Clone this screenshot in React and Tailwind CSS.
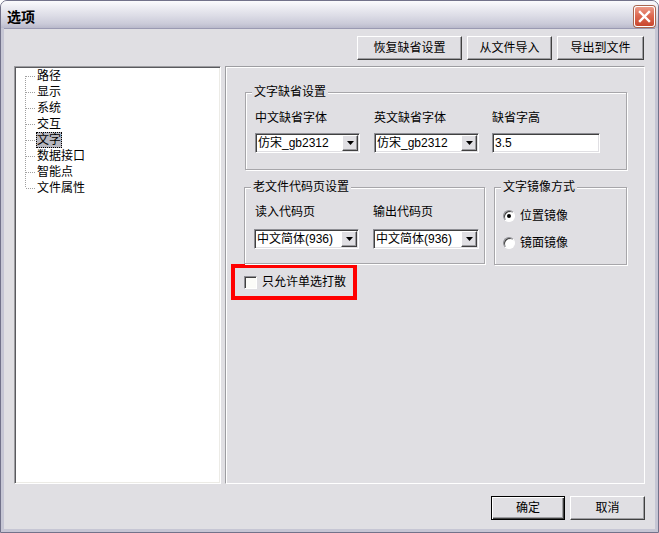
import React from "react";

const raised =
  "bg-[#e0dfe3] border border-t-white border-l-white border-r-[#404040] border-b-[#404040] shadow-[inset_-1px_-1px_0_#9d9da1]";

function Btn({ className, children, isDefault }) {
  if (isDefault) {
    return (
      <div className={`${className} h-[24px] border border-black bg-[#e0dfe3] shadow-[inset_1px_1px_0_white,inset_-1px_-1px_0_#404040,inset_-2px_-2px_0_#9d9da1] flex items-center justify-center text-[12px] leading-[12px]`}>
        {children}
      </div>
    );
  }
  return (
    <div className={`${className} h-[24px] ${raised} flex items-center justify-center text-[12px] leading-[12px]`}>
      {children}
    </div>
  );
}

const sunken =
  "border border-t-[#8e8e94] border-l-[#8e8e94] border-r-white border-b-white shadow-[inset_1px_1px_0_#404040,inset_-1px_-1px_0_#e0dfe3]";

function Combo({ className, text }) {
  return (
    <div className={`${className} h-[20px] bg-white ${sunken} flex items-center justify-between`}>
      <span className="pl-[2px] text-[12px] leading-[12px] whitespace-nowrap">{text}</span>
      <div className={`w-[16px] h-[16px] mr-[1px] ${raised} flex items-center justify-center`}>
        <svg width="7" height="4" viewBox="0 0 7 4">
          <path d="M0 0H7L3.5 4Z" fill="#000" />
        </svg>
      </div>
    </div>
  );
}

function Group({ className, title, children }) {
  return (
    <div className={`${className} relative border border-[#a7a6aa] shadow-[1px_1px_0_white,inset_1px_1px_0_white]`}>
      <span className="absolute left-[6px] -top-[7px] px-[2px] bg-[#e0dfe3] text-[12px] leading-[12px] whitespace-nowrap">
        {title}
      </span>
      {children}
    </div>
  );
}

function Radio({ checked, label }) {
  return (
    <div className="flex items-center h-[14px]">
      <div className="w-[12px] h-[12px] rounded-full border border-t-[#8e8e94] border-l-[#8e8e94] border-r-white border-b-white bg-white shadow-[inset_1px_1px_0_#404040] flex items-center justify-center">
        {checked && <div className="w-[4px] h-[4px] rounded-full bg-black" />}
      </div>
      <span className="ml-[5px] text-[12px] leading-[12px]">{label}</span>
    </div>
  );
}

const treeItems = ["路径", "显示", "系统", "交互", "文字", "数据接口", "智能点", "文件属性"];

function TreeRow({ label, index, last, selected }) {
  return (
    <div className="flex h-[16px] items-center">
      <svg width="22" height="16" viewBox="0 0 22 16" shapeRendering="crispEdges" className="shrink-0">
        <line
          x1="10.5"
          y1={index === 0 ? 8 : 0}
          x2="10.5"
          y2={last ? 8 : 16}
          stroke="#a0a0a0"
          strokeDasharray="1 1"
        />
        <line x1="11" y1="8.5" x2="20" y2="8.5" stroke="#a0a0a0" strokeDasharray="1 1" />
      </svg>
      {selected ? (
        <span className="-ml-[1px] px-[1px] h-[16px] flex items-center bg-[#b7b7bf] outline outline-1 outline-dotted outline-black -outline-offset-1 text-[12px] leading-[12px]">
          {label}
        </span>
      ) : (
        <span className="text-[12px] leading-[12px] whitespace-nowrap">{label}</span>
      )}
    </div>
  );
}

export default function App() {
  return (
    <div className="w-[659px] h-[533px] flex flex-col bg-[#e0dfe3] text-black font-['Liberation_Sans','Noto_Sans_CJK_SC',sans-serif] border border-[#72728a] rounded-t-[7px] overflow-hidden">
      {/* title bar */}
      <div className="h-[27px] shrink-0 flex items-center justify-between pl-[6px] pr-[3px] bg-[linear-gradient(to_bottom,#fbfbfd_0%,#ececf2_25%,#dcdce6_55%,#cacad8_85%,#b9b9cb_100%)]">
        <span className="text-[14px] leading-[14px] font-bold font-['Noto_Sans_CJK_SC',sans-serif] mt-[2px]">选项</span>
        <div className="w-[21px] h-[21px] mt-[3px] rounded-[3px] border border-white bg-[linear-gradient(to_bottom,#ec9a88_0%,#dd6a52_45%,#c8462e_100%)] shadow-[0_0_0_1px_#a8664f] flex items-center justify-center">
          <svg width="13" height="13" viewBox="0 0 13 13">
            <path d="M2 2L11 11M11 2L2 11" stroke="white" strokeWidth="2.4" strokeLinecap="square" />
          </svg>
        </div>
      </div>
      {/* frame */}
      <div className="flex-1 flex border-x-[3px] border-b-[3px] border-[#c6c6d4]">
        <div className="flex-1 flex flex-col border-t border-[#9a9ab2]">
          {/* top buttons */}
          <div className="flex justify-end gap-[5px] mt-[7px] pr-[11px]">
            <Btn className="w-[105px]">恢复缺省设置</Btn>
            <Btn className="w-[85px]">从文件导入</Btn>
            <Btn className="w-[87px]">导出到文件</Btn>
          </div>
          {/* main row */}
          <div className="flex gap-[4px] mt-[6px] pl-[10px] h-[418px]">
            {/* tree */}
            <div className="w-[207px] h-full bg-white border border-t-[#9d9da1] border-l-[#9d9da1] border-r-white border-b-white shadow-[inset_1px_1px_0_#5a5a5e,inset_-1px_-1px_0_#ecebe6] pt-[1px]">
              {treeItems.map((t, i) => (
                <TreeRow key={t} label={t} index={i} last={i === treeItems.length - 1} selected={t === "文字"} />
              ))}
            </div>
            {/* panel */}
            <div className="w-[420px] h-full border border-t-[#9d9da1] border-l-[#9d9da1] border-r-white border-b-white shadow-[inset_1px_1px_0_white] flex flex-col pt-[25px]">
              <Group className="ml-[19px] w-[382px] h-[78px]" title="文字缺省设置">
                <div className="flex pl-[9px] pt-[19px]">
                  <div className="flex flex-col gap-[9px] w-[105px]">
                    <span className="text-[12px] leading-[12px]">中文缺省字体</span>
                    <Combo className="w-[105px]" text="仿宋_gb2312" />
                  </div>
                  <div className="flex flex-col gap-[9px] w-[105px] ml-[14px]">
                    <span className="text-[12px] leading-[12px]">英文缺省字体</span>
                    <Combo className="w-[105px]" text="仿宋_gb2312" />
                  </div>
                  <div className="flex flex-col gap-[9px] w-[108px] ml-[13px]">
                    <span className="text-[12px] leading-[12px]">缺省字高</span>
                    <div className={`w-[108px] h-[20px] bg-white ${sunken} flex items-center`}>
                      <span className="pl-[2px] text-[12px] leading-[12px]">3.5</span>
                    </div>
                  </div>
                </div>
              </Group>
              <div className="flex ml-[18px] mt-[17px] gap-[9px]">
                <Group className="w-[241px] h-[77px]" title="老文件代码页设置">
                  <div className="flex pl-[9px] pt-[18px]">
                    <div className="flex flex-col gap-[11px] w-[105px]">
                      <span className="text-[12px] leading-[12px] pl-[1px]">读入代码页</span>
                      <Combo className="w-[105px]" text="中文简体(936)" />
                    </div>
                    <div className="flex flex-col gap-[11px] w-[106px] ml-[14px]">
                      <span className="text-[12px] leading-[12px]">输出代码页</span>
                      <Combo className="w-[106px]" text="中文简体(936)" />
                    </div>
                  </div>
                </Group>
                <Group className="w-[133px] h-[78px]" title="文字镜像方式">
                  <div className="flex flex-col gap-[13px] pl-[8px] pt-[21px]">
                    <Radio checked label="位置镜像" />
                    <Radio label="镜面镜像" />
                  </div>
                </Group>
              </div>
              <div className="ml-[5px] -mt-[1px] w-[126px] h-[36px] border-4 border-[#ff0000] flex items-center pl-[9px]">
                <div className="w-[13px] h-[13px] bg-[#fbfbf8] border border-t-[#8e8e94] border-l-[#8e8e94] border-r-white border-b-white shadow-[inset_1px_1px_0_#404040] mt-[1px]" />
                <span className="ml-[5px] text-[12px] leading-[12px] whitespace-nowrap">只允许单选打散</span>
              </div>
            </div>
          </div>
          {/* bottom buttons */}
          <div className="flex justify-end gap-[5px] mt-[12px] pr-[10px]">
            <Btn className="w-[74px]" isDefault>确定</Btn>
            <Btn className="w-[75px]">取消</Btn>
          </div>
        </div>
      </div>
    </div>
  );
}
